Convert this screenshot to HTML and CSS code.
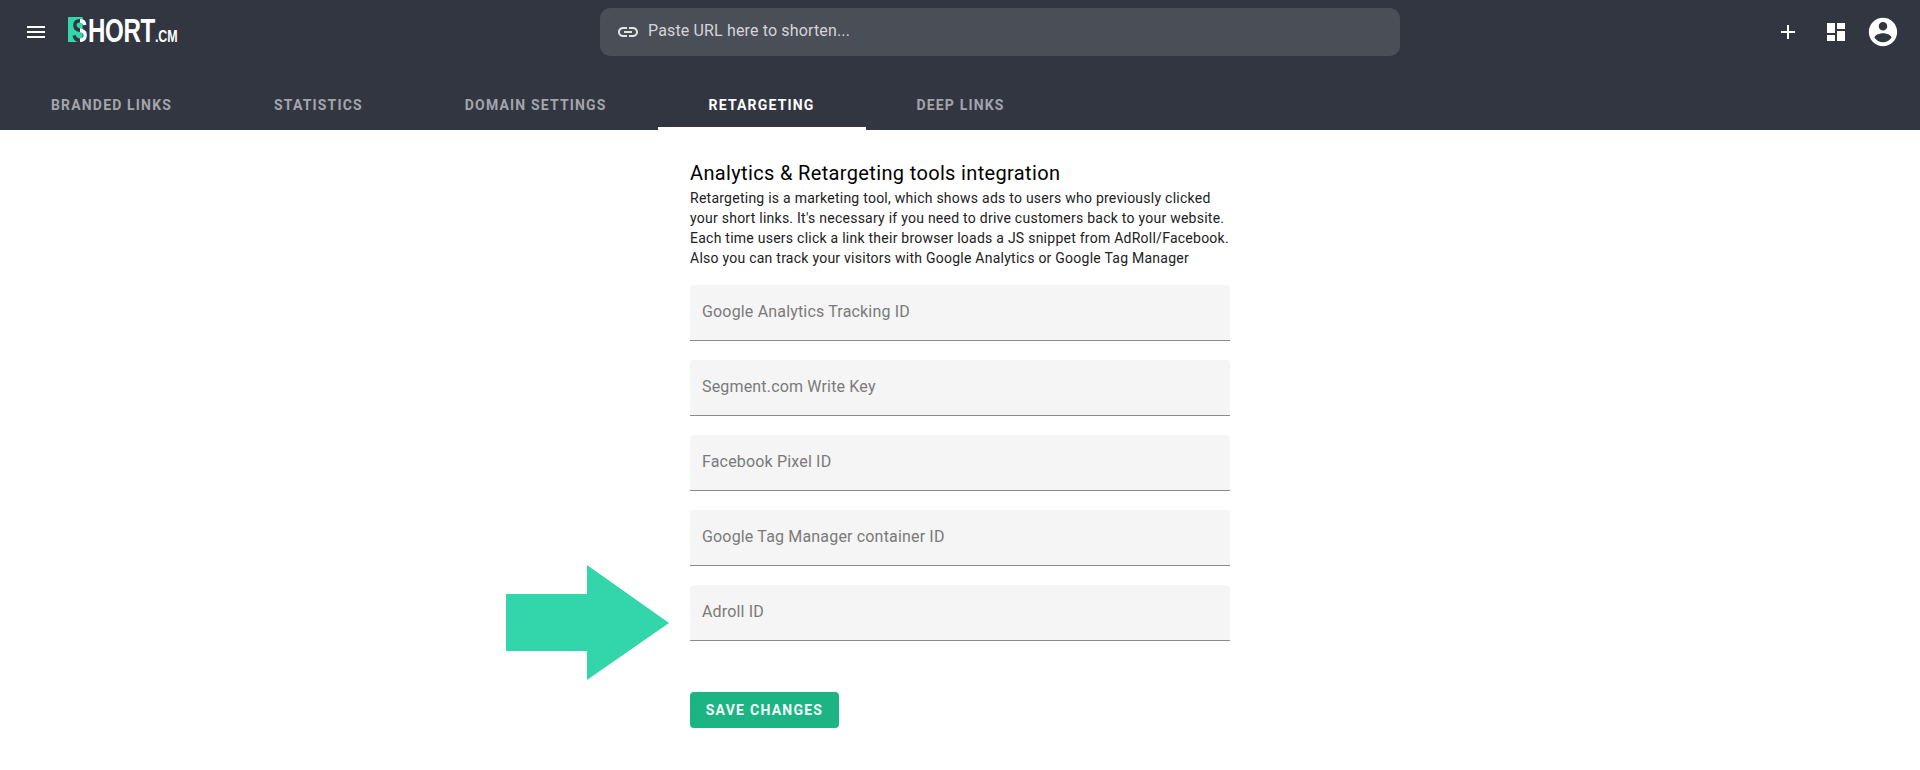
FILE: index.html
```html
<!DOCTYPE html>
<html>
<head lang="en">
    <meta charset="UTF-8">
    <title>Short.cm - Retargeting</title>
    <link rel="stylesheet" href="styles.css">
</head>
<body>
<header class="header">
    <div class="toolbar">
        <div class="toolbar-left">
            <svg class="menu-icon" width="24" height="24" viewBox="0 0 24 24"><path fill="#fff" d="M3 18h18v-2H3v2zm0-5h18v-2H3v2zm0-7v2h18V6H3z"/></svg>
            <a class="logo" href="#"><span class="logo-mark"><span class="logo-s">S</span></span><span class="logo-hort">HORT</span><span class="logo-cm">.CM</span></a>
        </div>
        <div class="search">
            <svg width="24" height="24" viewBox="0 0 24 24"><path fill="#e2e3e5" d="M3.9 12c0-1.71 1.39-3.1 3.1-3.1h4V7H7c-2.76 0-5 2.24-5 5s2.24 5 5 5h4v-1.9H7c-1.71 0-3.1-1.39-3.1-3.1zM8 13h8v-2H8v2zm9-6h-4v1.9h4c1.71 0 3.1 1.39 3.1 3.1s-1.39 3.1-3.1 3.1h-4V17h4c2.76 0 5-2.24 5-5s-2.24-5-5-5z"/></svg>
            <span class="search-text">Paste URL here to shorten...</span>
        </div>
        <div class="toolbar-right">
            <svg width="24" height="24" viewBox="0 0 24 24"><path fill="#fff" d="M19 13h-6v6h-2v-6H5v-2h6V5h2v6h6v2z"/></svg>
            <svg width="24" height="24" viewBox="0 0 24 24"><path fill="#fff" d="M3 13h8V3H3v10zm0 8h8v-6H3v6zm10 0h8V11h-8v10zm0-18v6h8V3h-8z"/></svg>
            <svg class="avatar" width="34" height="34" viewBox="0 0 24 24"><path fill="#fff" d="M12 2C6.48 2 2 6.48 2 12s4.48 10 10 10 10-4.48 10-10S17.52 2 12 2zm0 3c1.66 0 3 1.34 3 3s-1.34 3-3 3-3-1.34-3-3 1.34-3 3-3zm0 14.2c-2.5 0-4.71-1.28-6-3.22.03-1.99 4-3.08 6-3.08 1.99 0 5.97 1.09 6 3.08-1.29 1.94-3.5 3.22-6 3.22z"/></svg>
        </div>
    </div>
    <nav class="tabs">
        <a class="tab" href="#">Branded links</a>
        <a class="tab" href="#">Statistics</a>
        <a class="tab" href="#">Domain settings</a>
        <a class="tab current" href="#">Retargeting</a>
        <a class="tab" href="#">Deep links</a>
    </nav>
</header>

<main class="content">
    <h2>Analytics &amp; Retargeting tools integration</h2>
    <p class="intro">Retargeting is a marketing tool, which shows ads to users who previously clicked<br>
        your short links. It's necessary if you need to drive customers back to your website.<br>
        Each time users click a link their browser loads a JS snippet from AdRoll/Facebook.<br>
        Also you can track your visitors with Google Analytics or Google Tag Manager</p>

    <div class="field"><input type="text" placeholder="Google Analytics Tracking ID"></div>
    <div class="field"><input type="text" placeholder="Segment.com Write Key"></div>
    <div class="field"><input type="text" placeholder="Facebook Pixel ID"></div>
    <div class="field"><input type="text" placeholder="Google Tag Manager container ID"></div>
    <div class="field field-arrow">
        <svg class="arrow" width="164" height="116" viewBox="0 0 164 116"><polygon fill="#33d6aa" points="0,29 81,29 81,0 163,58 81,115 81,86 0,86"/></svg>
        <input type="text" placeholder="Adroll ID">
    </div>

    <button class="save">Save changes</button>
</main>
</body>
</html>
```

FILE: styles.css
```css
* {
    padding: 0;
    margin: 0;
    box-sizing: border-box;
}
body {
    font-family: Roboto, "Liberation Sans", sans-serif;
    background-color: #fff;
    color: #000;
}
a {
    text-decoration: none;
}
.header {
    height: 130px;
    background-color: #323641;
}
.toolbar {
    height: 64px;
    display: grid;
    grid-template-columns: 600px 800px 1fr;
}
.toolbar-left {
    display: flex;
    align-items: center;
    padding-left: 24px;
}
.menu-icon {
    margin-right: 20px;
}
/* squeezed because there is no condensed font here */
.logo {
    display: flex;
    align-items: baseline;
    color: #fff;
    font-family: "Liberation Sans", sans-serif;
    font-weight: 700;
    font-size: 33px;
    line-height: 33px;
    letter-spacing: -.5px;
    transform: translateY(1px) scaleX(.73);
    transform-origin: left center;
}
.logo-mark {
    padding-left: 5px;
    margin-right: 1px;
    background: linear-gradient(#33d6aa, #33d6aa) no-repeat 0 3px / 20px 25px;
}
.logo-s {
    display: inline-block;
    color: transparent;
    background-image: linear-gradient(90deg, #323641 11px, #fff 11px);
    -webkit-background-clip: text;
    background-clip: text;
}
.logo-cm {
    font-size: 17px;
    letter-spacing: 0;
}
.search {
    margin-top: 8px;
    height: 48px;
    border-radius: 10px;
    background-color: #4a4e57;
    display: flex;
    align-items: center;
    padding-left: 16px;
    gap: 8px;
}
.search svg {
    margin-top: -1px;
}
.search-text {
    margin-top: -4px;
    font-size: 16px;
    letter-spacing: .15px;
    color: #d4d5d8;
}
.toolbar-right {
    display: flex;
    align-items: center;
    justify-content: flex-end;
    gap: 24px;
    padding-right: 20px;
}
.avatar {
    margin-left: -6px;
}
.tabs {
    height: 66px;
    display: flex;
    align-items: flex-end;
}
.tab {
    height: 48px;
    line-height: 46px;
    padding: 0 51px;
    font-size: 14px;
    font-weight: 700;
    letter-spacing: 1.17px;
    text-transform: uppercase;
    color: #a3a5ab;
}
.current {
    color: #fff;
    border-bottom: 3px solid #fff;
}
.content {
    width: 540px;
    margin-left: 690px;
    padding-top: 31px;
}
h2 {
    font-size: 20px;
    font-weight: 450;
    line-height: 24px;
    letter-spacing: .35px;
    margin-bottom: 3px;
}
.intro {
    font-size: 14px;
    line-height: 20px;
    letter-spacing: .25px;
    color: #212121;
    margin-bottom: 17px;
}
.field {
    height: 56px;
    margin-bottom: 19px;
    position: relative;
}
.field input {
    width: 100%;
    height: 100%;
    border: 0;
    border-bottom: 1px solid #8a8a8a;
    border-radius: 4px 4px 0 0;
    background-color: #f5f5f5;
    padding: 0 12px 2px;
    font-family: inherit;
    font-size: 16px;
    letter-spacing: .17px;
    outline: none;
}
.field input::placeholder {
    color: #7a7a7a;
    opacity: 1;
}
.arrow {
    position: absolute;
    left: -184px;
    top: -20px;
}
.save {
    display: block;
    margin-top: 51px;
    width: 149px;
    height: 36px;
    border: 0;
    border-radius: 4px;
    background-color: #1db483;
    color: #f2fbf8;
    font-family: inherit;
    font-size: 14px;
    font-weight: 700;
    letter-spacing: 1.25px;
    text-transform: uppercase;
}
```
